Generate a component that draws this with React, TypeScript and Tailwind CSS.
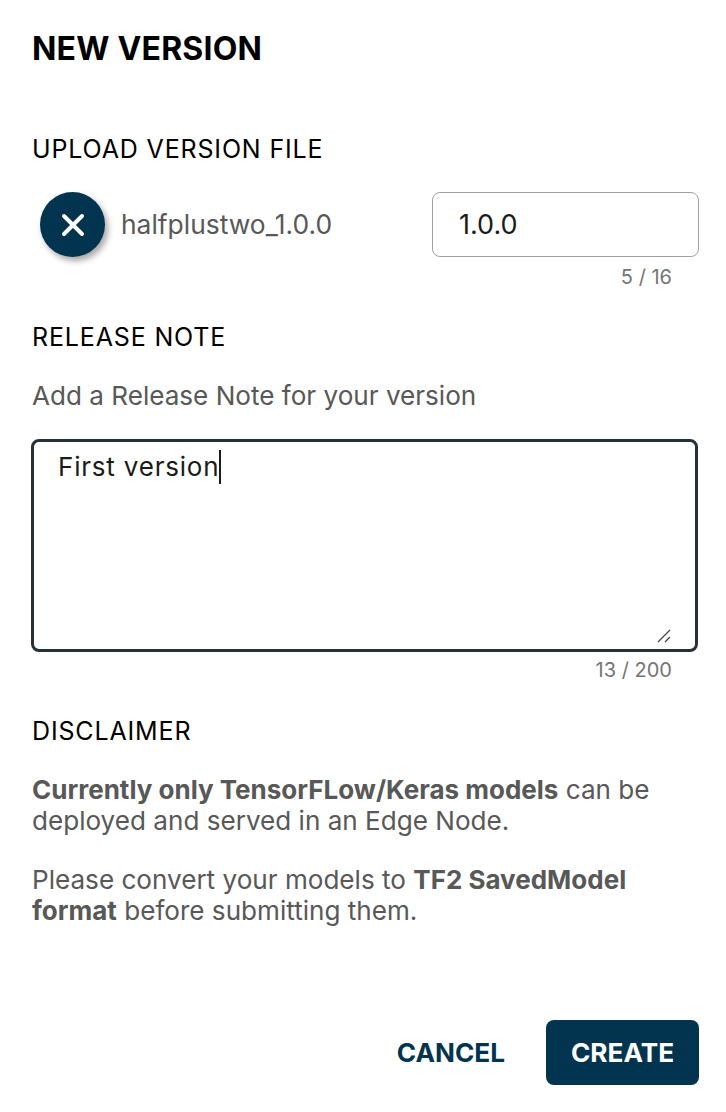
import { X } from "lucide-react";

export default function App() {
  return (
    <div className="w-[726px] h-[1112px] bg-white pl-8 pr-[27px] pt-[27px] font-['Inter',sans-serif] flex flex-col">
      <h1 className="text-[32px] leading-[44px] font-bold text-black tracking-[0.2px]">NEW VERSION</h1>

      <h2 className="mt-[62px] text-[25px] leading-[32px] font-normal text-black tracking-[0.85px]">UPLOAD VERSION FILE</h2>
      <div className="mt-[27px] flex items-start justify-between">
        <div className="flex items-center gap-4 pl-2 h-[65px]">
          <button className="w-[65px] h-[65px] rounded-full bg-[#02344f] shadow-[3px_4px_6px_rgba(0,0,0,0.35)] flex items-center justify-center">
            <X className="text-white w-[36px] h-[36px]" strokeWidth={2.6} />
          </button>
          <span className="text-[26.4px] text-[#585858]">halfplustwo_1.0.0</span>
        </div>
        <div className="w-[267px]">
          <div className="h-[65px] border border-[#a0a0a0] rounded-lg pl-[26px] pt-[2px] flex items-center text-[27px] text-[#1a1a1a]">1.0.0</div>
          <div className="mt-[8px] pr-[27px] text-right text-[20px] leading-[24px] text-[#757575]">5 / 16</div>
        </div>
      </div>

      <h2 className="mt-[32px] text-[25px] leading-[32px] font-normal text-black tracking-[0.85px]">RELEASE NOTE</h2>
      <p className="mt-[26px] text-[26.1px] leading-[34px] text-[#585858]">Add a Release Note for your version</p>
      <div className="mt-[26px] -ml-px mr-px relative h-[213px] border-[3px] border-[#263238] rounded-lg pl-[24px] pt-[8px]">
        <span className="text-[26px] leading-[34px] text-[#1a1a1a] tracking-[0.8px] border-r-2 border-[#1a1a1a] inline-block">First version</span>
        <svg className="absolute right-[24px] bottom-[6px]" width="14" height="14" viewBox="0 0 14 14" fill="none" stroke="#444" strokeWidth="1.3">
          <path d="M1 13 L13 1" />
          <path d="M8 13 L13 8" />
        </svg>
      </div>
      <div className="mt-[6px] pr-[27px] text-right text-[20px] leading-[24px] text-[#757575]">13 / 200</div>

      <h2 className="mt-[33px] text-[25px] leading-[32px] font-normal text-black tracking-[0.85px]">DISCLAIMER</h2>
      <p className="mt-[27px] text-[26.1px] leading-[31px] text-[#585858]">
        <b className="font-bold text-[26px]">Currently only TensorFLow/Keras models</b> can be deployed and served in an Edge Node.
      </p>
      <p className="mt-[28px] text-[26.1px] leading-[31px] text-[#585858]">
        Please convert your models to <b className="font-bold text-[26px]">TF2 SavedModel format</b> before submitting them.
      </p>

      <div className="mt-auto mb-[27px] flex items-center justify-end gap-[41px]">
        <button className="text-[26.2px] font-bold text-[#02344f]">CANCEL</button>
        <button className="w-[153px] h-[65px] rounded-lg bg-[#02344f] text-white text-[26.2px] font-bold">CREATE</button>
      </div>
    </div>
  );
}
